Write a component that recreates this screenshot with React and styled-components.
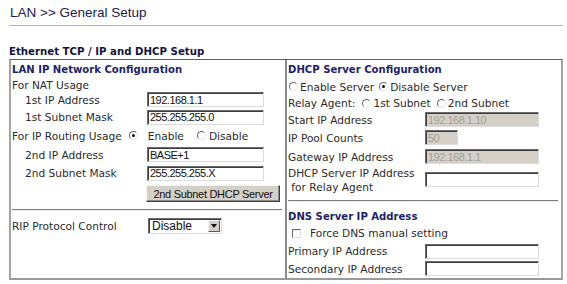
import React from "react";
import styled, { createGlobalStyle } from "styled-components";

const Global = createGlobalStyle`
  body {
    margin: 0;
    background: #ffffff;
  }
`;

const Page = styled.div`
  width: 554px;
  margin-left: 9px;
  font-family: "DejaVu Sans", Verdana, sans-serif;
  font-size: 10.6px;
  color: #2a2a2a;
`;

const TitleBar = styled.div`
  height: 25px;
  display: flex;
  align-items: center;
  padding-left: 1px;
  border-bottom: 1px solid #b4b4b4;
  font-family: "Liberation Sans", Arial, sans-serif;
  font-size: 13.5px;
  color: #18214e;
`;

const SubTitle = styled.div`
  margin-top: 17px;
  height: 16px;
  display: flex;
  align-items: center;
  font-weight: bold;
  font-size: 10.2px;
  color: #14143c;
`;

const Frame = styled.div`
  display: grid;
  grid-template-columns: 276px 274px;
  height: 221px;
  box-sizing: border-box;
  border-top: 1px solid #5c5c5c;
  border-left: 2px solid #a4a4a4;
  border-right: 2px solid #a4a4a4;
  border-bottom: 2px solid #9a9a9a;
`;

const Cell = styled.div`
  display: flex;
  flex-direction: column;
  padding-left: 1px;
  box-sizing: border-box;
  border-right: ${(p) => (p.$divider ? "2px solid #8c8c8c" : "none")};
`;

const Heading = styled.div`
  height: ${(p) => p.$h}px;
  display: flex;
  align-items: center;
  font-weight: bold;
  font-size: 10.1px;
  color: #1f1f66;
`;

const Row = styled.div`
  height: ${(p) => p.$h}px;
  display: flex;
  align-items: ${(p) => (p.$top ? "flex-start" : "center")};
  white-space: nowrap;
`;

const Label = styled.div`
  width: ${(p) => p.$w}px;
  padding-left: ${(p) => p.$indent || 0}px;
  box-sizing: border-box;
  flex-shrink: 0;
  line-height: 14px;
`;

const TextBox = styled.input`
  width: ${(p) => p.$w}px;
  height: 15px;
  margin: ${(p) => (p.$mt ? `${p.$mt}px 0 0 0` : 0)};
  padding: 0 0 0 2px;
  box-sizing: border-box;
  border: 1px solid;
  border-color: #6c6c6c #dcdcdc #dcdcdc #6c6c6c;
  box-shadow: inset 1px 1px 0 #3c3c3c;
  background: ${(p) => (p.disabled ? "#d4d0c8" : "#ffffff")};
  color: ${(p) => (p.disabled ? "#a29f99" : "#111111")};
  font-family: "Liberation Sans", Arial, sans-serif;
  font-size: 11px;
  letter-spacing: -0.5px;
  outline: none;
`;

const Button = styled.div`
  width: 134px;
  height: 17px;
  margin-left: 134px;
  margin-top: 3px;
  box-sizing: border-box;
  display: flex;
  align-items: center;
  justify-content: center;
  background: #d4d0c8;
  border: 1px solid;
  border-color: #f4f4f4 #404040 #404040 #f4f4f4;
  box-shadow: inset -1px -1px 0 #8a8a8a;
  font-family: "Liberation Sans", Arial, sans-serif;
  font-size: 11px;
  letter-spacing: -0.3px;
  color: #111111;
`;

const Rule = styled.div`
  height: 1px;
  margin: ${(p) => p.$mt}px 3px 0 0;
  background: #7c7c7c;
  border-bottom: 1px solid #ececec;
`;

const Radio = styled.span`
  display: inline-block;
  position: relative;
  width: 7px;
  height: 7px;
  margin: 0 ${(p) => p.$mr}px 0 ${(p) => p.$ml}px;
  border: 1px solid;
  border-color: #6a6a6a #e6e6e6 #e6e6e6 #6a6a6a;
  border-radius: 50%;
  background: #ffffff;
  flex-shrink: 0;

  &::after {
    content: "";
    display: ${(p) => (p.$on ? "block" : "none")};
    position: absolute;
    left: 2px;
    top: 2px;
    width: 3px;
    height: 3px;
    border-radius: 50%;
    background: #111111;
  }
`;

const Check = styled.span`
  display: inline-block;
  width: 7px;
  height: 7px;
  margin: 0 9px 0 4px;
  border: 1px solid;
  border-color: #6a6a6a #e0e0e0 #e0e0e0 #6a6a6a;
  background: #ffffff;
`;

const Select = styled.div`
  width: 74px;
  height: 16px;
  box-sizing: border-box;
  display: flex;
  align-items: center;
  justify-content: space-between;
  padding: 0 1px 0 3px;
  border: 1px solid;
  border-color: #6c6c6c #dcdcdc #dcdcdc #6c6c6c;
  box-shadow: inset 1px 1px 0 #3c3c3c;
  font-family: "Liberation Sans", Arial, sans-serif;
  font-size: 12px;
  color: #111111;
`;

const Arrow = styled.span`
  width: 12px;
  height: 12px;
  display: flex;
  align-items: center;
  justify-content: center;
  background: #d4d0c8;
  border: 1px solid;
  border-color: #f2f2f2 #5a5a5a #5a5a5a #f2f2f2;
  box-sizing: border-box;
`;

const LEFT_LABEL = 135;
const RIGHT_LABEL = 137;

export default function App() {
  return (
    <Page>
      <Global />
      <TitleBar>LAN &gt;&gt; General Setup</TitleBar>
      <SubTitle>Ethernet TCP / IP and DHCP Setup</SubTitle>
      <Frame>
        <Cell $divider>
          <Heading $h={18}>LAN IP Network Configuration</Heading>
          <Row $h={13}>For NAT Usage</Row>
          <Row $h={17}>
            <Label $w={LEFT_LABEL} $indent={13}>1st IP Address</Label>
            <TextBox $w={117} defaultValue="192.168.1.1" />
          </Row>
          <Row $h={18}>
            <Label $w={LEFT_LABEL} $indent={13}>1st Subnet Mask</Label>
            <TextBox $w={117} defaultValue="255.255.255.0" />
          </Row>
          <Row $h={19}>
            For IP Routing Usage
            <Radio $on $ml={7} $mr={10} />
            Enable
            <Radio $ml={13} $mr={3} />
            Disable
          </Row>
          <Row $h={19}>
            <Label $w={LEFT_LABEL} $indent={13}>2nd IP Address</Label>
            <TextBox $w={117} defaultValue="BASE+1" />
          </Row>
          <Row $h={18}>
            <Label $w={LEFT_LABEL} $indent={13}>2nd Subnet Mask</Label>
            <TextBox $w={117} defaultValue="255.255.255.X" />
          </Row>
          <Row $h={22} $top>
            <Button>2nd Subnet DHCP Server</Button>
          </Row>
          <Rule $mt={5} />
          <Row $h={20} style={{ marginTop: 5 }}>
            <Label $w={136}>RIP Protocol Control</Label>
            <Select>
              Disable
              <Arrow>
                <svg width="6" height="4" viewBox="0 0 6 4">
                  <path d="M0 0h6L3 4z" fill="#111" />
                </svg>
              </Arrow>
            </Select>
          </Row>
        </Cell>
        <Cell>
          <Heading $h={18}>DHCP Server Configuration</Heading>
          <Row $h={17}>
            <Radio $ml={1} $mr={2} />
            Enable Server
            <Radio $on $ml={5} $mr={2} />
            Disable Server
          </Row>
          <Row $h={16}>
            Relay Agent:
            <Radio $ml={7} $mr={2} />
            1st Subnet
            <Radio $ml={6} $mr={2} />
            2nd Subnet
          </Row>
          <Row $h={17}>
            <Label $w={RIGHT_LABEL}>Start IP Address</Label>
            <TextBox $w={114} disabled defaultValue="192.168.1.10" />
          </Row>
          <Row $h={19}>
            <Label $w={RIGHT_LABEL}>IP Pool Counts</Label>
            <TextBox $w={33} disabled defaultValue="50" />
          </Row>
          <Row $h={19}>
            <Label $w={RIGHT_LABEL}>Gateway IP Address</Label>
            <TextBox $w={114} disabled defaultValue="192.168.1.1" />
          </Row>
          <Row $h={29} $top>
            <Label $w={RIGHT_LABEL}>
              DHCP Server IP Address
              <br />
              &nbsp;for Relay Agent
            </Label>
            <TextBox $w={114} $mt={6} />
          </Row>
          <Rule $mt={5} />
          <Heading $h={16} style={{ marginTop: 6 }}>DNS Server IP Address</Heading>
          <Row $h={18}>
            <Check />
            Force DNS manual setting
          </Row>
          <Row $h={18}>
            <Label $w={RIGHT_LABEL}>Primary IP Address</Label>
            <TextBox $w={114} />
          </Row>
          <Row $h={17}>
            <Label $w={RIGHT_LABEL}>Secondary IP Address</Label>
            <TextBox $w={114} />
          </Row>
        </Cell>
      </Frame>
    </Page>
  );
}
